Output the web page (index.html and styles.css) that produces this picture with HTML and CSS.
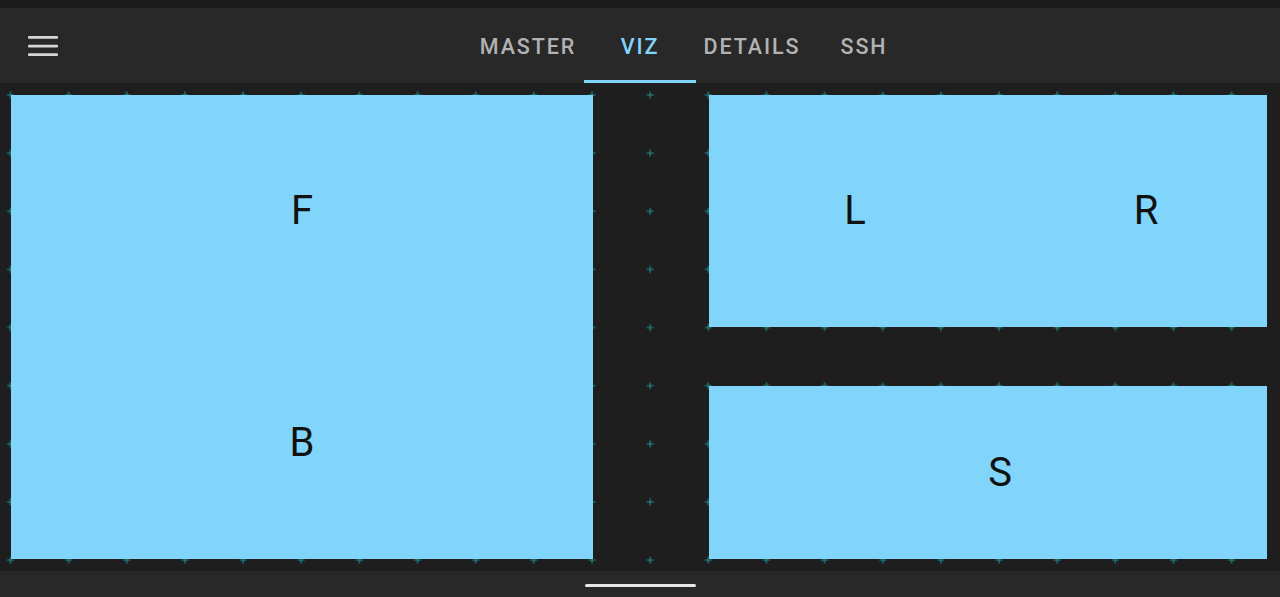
FILE: index.html
```html
<!DOCTYPE html>
<html lang="en">
<head>
<meta charset="utf-8">
<title>Viz</title>
<link rel="stylesheet" href="styles.css">
</head>
<body>
<div class="app">
  <div class="statusbar"></div>
  <header class="appbar">
    <div class="menu">
      <svg class="menu-icon" width="30" height="22" viewBox="0 0 30 22">
        <rect x="0" y="0" width="30" height="2.8" rx="1" fill="#d6d6d6"/>
        <rect x="0" y="8.7" width="30" height="2.8" rx="1" fill="#d6d6d6"/>
        <rect x="0" y="17.2" width="30" height="2.8" rx="1" fill="#d6d6d6"/>
      </svg>
    </div>
    <nav class="tabs">
      <div class="tab">MASTER</div>
      <div class="tab active">VIZ</div>
      <div class="tab">DETAILS</div>
      <div class="tab">SSH</div>
    </nav>
  </header>
  <main class="canvas">
    <svg class="grid-marks" width="1280" height="488">
      <defs>
        <pattern id="plus" patternUnits="userSpaceOnUse" x="6.5" y="8" width="58.15" height="58.15">
          <path d="M0.5 4H7.5M4 0.5V7.5" stroke="#1f8f94" stroke-width="1.1" fill="none"/>
        </pattern>
      </defs>
      <rect width="1280" height="488" fill="url(#plus)"/>
    </svg>
    <div class="layout">
      <section class="block block-fb">
        <div class="cell">F</div>
        <div class="cell">B</div>
      </section>
      <section class="block block-lr">
        <div class="label">L</div>
        <div class="label">R</div>
      </section>
      <section class="block block-s">
        <div class="label">S</div>
      </section>
    </div>
  </main>
  <footer class="navbar">
    <div class="home-indicator"></div>
  </footer>
</div>
</body>
</html>
```
FILE: styles.css
```css
* { box-sizing: border-box; }

html, body {
  margin: 0;
  padding: 0;
  width: 1280px;
  height: 597px;
  overflow: hidden;
  background: #1e1e1e;
  font-family: Roboto, "Noto Sans", "Liberation Sans", sans-serif;
}

.app {
  display: flex;
  flex-direction: column;
  width: 1280px;
  height: 597px;
}

.statusbar {
  height: 8px;
  background: #1b1b1b;
  flex: none;
}

.appbar {
  height: 75px;
  flex: none;
  background: #282828;
  display: flex;
  align-items: stretch;
}

.menu {
  width: 112px;
  flex: none;
  display: flex;
  align-items: center;
  padding-left: 28px;
  padding-top: 3px;
}

.menu-icon { display: block; }

.tabs {
  flex: 1;
  display: flex;
  justify-content: center;
}

.tab {
  width: 112px;
  display: flex;
  align-items: center;
  justify-content: center;
  font-size: 21.5px;
  font-weight: 500;
  letter-spacing: 1.9px;
  color: #b2b2b2;
  border-bottom: 3px solid transparent;
  padding-top: 5px;
}

.tab.active {
  color: #81d4fa;
  border-bottom-color: #81d4fa;
}

.canvas {
  position: relative;
  flex: 1;
  background: #1e1e1e;
  padding: 12px 0 0 11px;
}

.grid-marks {
  position: absolute;
  left: 0;
  top: 0;
}

.layout {
  position: relative;
  display: grid;
  grid-template-columns: 582px 558px;
  grid-template-rows: 232px 173px;
  column-gap: 116px;
  row-gap: 59px;
}

.block {
  background: #81d4fa;
  color: #111;
  font-size: 40px;
  line-height: 1;
}

.block-fb {
  grid-row: 1 / 3;
  display: flex;
  flex-direction: column;
}

.cell {
  flex: 1;
  display: flex;
  align-items: center;
  justify-content: center;
}

.block-lr {
  display: flex;
  align-items: center;
  justify-content: space-between;
  padding: 0 101px 0 126px;
}

.label {
  width: 40px;
  text-align: center;
}

.block-s {
  display: flex;
  align-items: center;
  justify-content: center;
  padding-left: 24px;
}

.navbar {
  height: 26px;
  flex: none;
  background: #282828;
  display: flex;
  justify-content: center;
  padding-top: 13px;
}

.home-indicator {
  width: 111px;
  height: 3px;
  border-radius: 2px;
  background: #e6e6e6;
}
```
